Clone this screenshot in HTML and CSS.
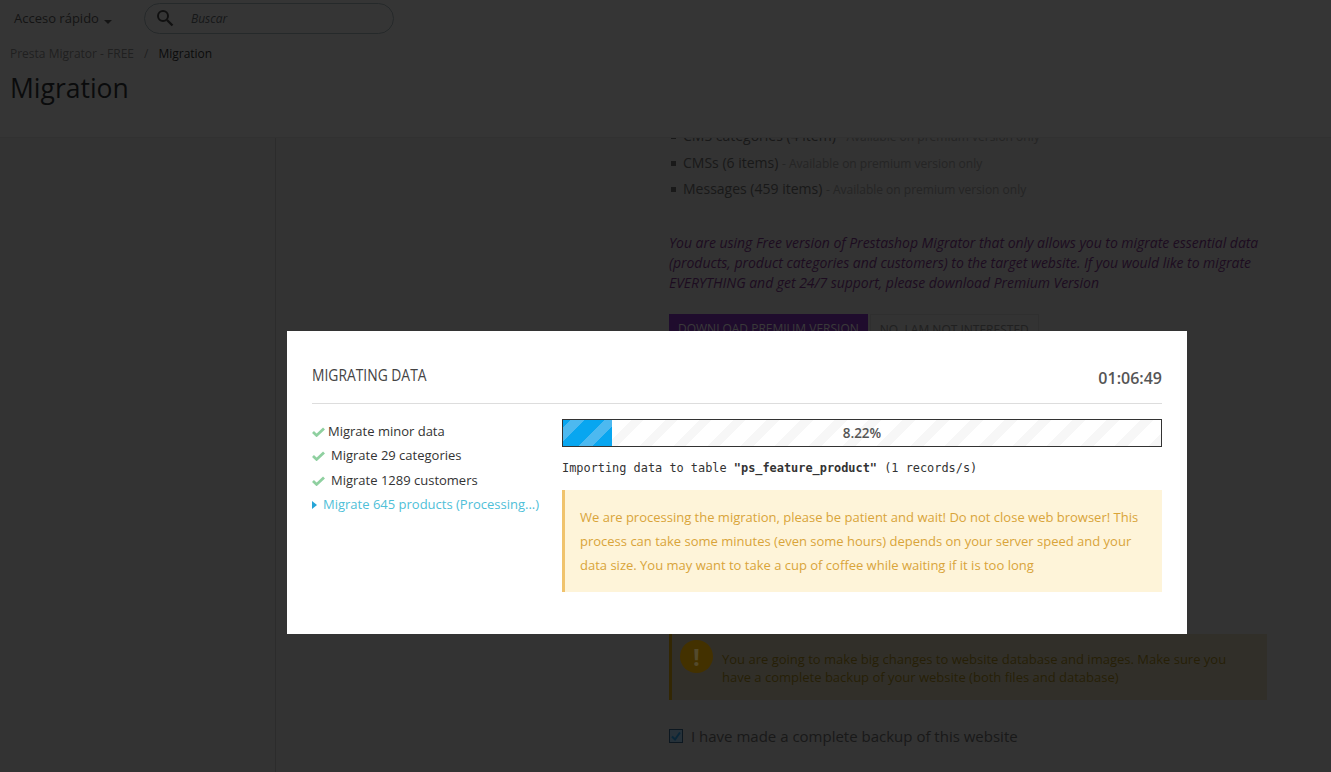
FILE: index.html
```html
<!DOCTYPE html>
<html lang="en">
<head>
  <meta charset="UTF-8" />
  <meta name="viewport" content="width=device-width, initial-scale=1.0"/>
  <title>Migration</title>
  <link rel="stylesheet" href="styles.css">
</head>
<body>

  <header class="top">
    <div class="top-bar">
      <span class="quick">Acceso rápido <i class="caret"></i></span>
      <div class="search">
        <svg class="search-icon" width="18" height="18" viewBox="0 0 18 18"><circle cx="7" cy="7" r="5" fill="none" stroke="currentColor" stroke-width="2"/><path d="M11 11l5.5 5.5" stroke="currentColor" stroke-width="2.4"/></svg>
        <em>Buscar</em>
      </div>
    </div>
    <div class="crumbs"><span>Presta Migrator - FREE</span><span class="sep">/</span><b>Migration</b></div>
    <h1>Migration</h1>
  </header>

  <div class="page">
    <aside class="side"></aside>
    <main class="main">
      <ul class="items">
        <li>CMS categories (4 item) <small>- Available on premium version only</small></li>
        <li>CMSs (6 items) <small>- Available on premium version only</small></li>
        <li>Messages (459 items) <small>- Available on premium version only</small></li>
      </ul>
      <p class="free">You are using Free version of Prestashop Migrator that only allows you to migrate essential data (products, product categories and customers) to the target website. If you would like to migrate EVERYTHING and get 24/7 support, please download Premium Version</p>
      <div class="free-btns">
        <span class="btn-buy">DOWNLOAD PREMIUM VERSION</span>
        <span class="btn-no">NO, I AM NOT INTERESTED</span>
      </div>
      <div class="warn">
        <span class="warn-icon">!</span>
        <p>You are going to make big changes to website database and images. Make sure you have a complete backup of your website (both files and database)</p>
      </div>
      <label class="confirm">
        <span class="check"><svg width="12" height="12" viewBox="0 0 12 12"><path d="M2 6.5l3 3 5-7" fill="none" stroke="#17608c" stroke-width="2"/></svg></span>
        I have made a complete backup of this website
      </label>
    </main>
  </div>

  <div class="overlay"></div>

  <div class="modal">
    <div class="modal-head">
      <h2>MIGRATING DATA</h2>
      <span class="timer">01:06:49</span>
    </div>
    <div class="modal-body">
      <ul class="steps">
        <li class="first"><svg class="tick" width="13" height="10" viewBox="0 0 13 10"><path d="M1 5l3.6 3.4L12 1.5" fill="none" stroke="#8fd0a0" stroke-width="2.8"/></svg>Migrate minor data</li>
        <li><svg class="tick" width="13" height="10" viewBox="0 0 13 10"><path d="M1 5l3.6 3.4L12 1.5" fill="none" stroke="#8fd0a0" stroke-width="2.8"/></svg>Migrate 29 categories</li>
        <li><svg class="tick" width="13" height="10" viewBox="0 0 13 10"><path d="M1 5l3.6 3.4L12 1.5" fill="none" stroke="#8fd0a0" stroke-width="2.8"/></svg>Migrate 1289 customers</li>
        <li class="active"><i class="arrow"></i>Migrate 645 products (Processing...)</li>
      </ul>
      <div class="status">
        <div class="progress">
          <div class="progress-bar" style="width: 8.22%"></div>
          <span class="progress-label">8.22%</span>
        </div>
        <div class="table-line">Importing data to table <b>"ps_feature_product"</b> (1 records/s)</div>
        <div class="notice">We are processing the migration, please be patient and wait! Do not close web browser! This process can take some minutes (even some hours) depends on your server speed and your data size. You may want to take a cup of coffee while waiting if it is too long</div>
      </div>
    </div>
  </div>

</body>
</html>
```

FILE: styles.css
```css
* {
  margin: 0;
  padding: 0;
  box-sizing: border-box;
}

html, body {
  height: 772px;
  overflow: hidden;
}

body {
  font-family: "Open Sans", sans-serif;
  font-size: 14px;
  color: #555;
  background: #7f7f7f;
  position: relative;
}

/* header */
.top {
  position: relative;
  z-index: 2;
  height: 138px;
  background: #868686;
  border-bottom: 1px solid #7a7a7a;
  padding-left: 10px;
}

.top-bar {
  display: flex;
  align-items: center;
  height: 36px;
}

.quick {
  font-size: 13px;
  color: #343434;
  margin-left: 4px;
  width: 130px;
}

.caret {
  display: inline-block;
  border: 4px solid transparent;
  border-top-color: #343434;
  border-bottom: 0;
  margin-left: 2px;
  vertical-align: -1px;
}

.search {
  display: flex;
  align-items: center;
  width: 250px;
  height: 31px;
  border: 1px solid #5e6669;
  border-radius: 16px;
  color: #2a2a2a;
  padding-left: 11px;
}

.search em {
  font-size: 12px;
  margin-left: 17px;
  color: #383c40;
}

.crumbs {
  font-size: 12px;
  margin-top: 9px;
  color: #505050;
}

.crumbs .sep {
  margin: 0 10px;
}

.crumbs b {
  font-weight: 400;
  color: #1b1d20;
}

h1 {
  font-size: 26.5px;
  font-weight: 400;
  color: #1b1d20;
  line-height: 36px;
  margin-top: 8px;
}

/* page behind the dialog */
.page {
  display: grid;
  grid-template-columns: 276px 1fr;
  height: 634px;
}

.side {
  border-right: 1px solid #6e6e6e;
}

.main {
  padding: 0 64px 0 393px;
  margin-top: -15px;
}

.items {
  list-style: none;
  font-size: 14px;
  line-height: 26.5px;
  color: #404040;
}

.items li {
  height: 26.5px;
}

.items li::before {
  content: "";
  display: inline-block;
  width: 5px;
  height: 5px;
  margin: 0 7px 2px 2px;
  background: #404040;
}

.items small {
  font-size: 12px;
  color: #5c5c5c;
}

.free {
  font-style: italic;
  line-height: 20px;
  letter-spacing: -0.03px;
  color: #4a1f52;
  margin-top: 30px;
}

.free-btns {
  display: flex;
  gap: 2px;
  margin-top: 21px;
  height: 30px;
  font-size: 12px;
}

.btn-buy {
  background: #4f1f70;
  color: #909090;
  padding: 6px 9px;
}

.btn-no {
  border: 1px solid #767676;
  padding: 6px 9px;
  color: #505050;
}

.warn {
  display: flex;
  gap: 9px;
  height: 66px;
  margin-top: 290px;
  background: #7c7768;
  border-left: 3px solid #806308;
  padding: 6px 30px 0 8px;
  font-size: 13px;
  line-height: 18px;
  color: #5f4f10;
}

.warn p {
  margin-top: 10px;
}

.warn-icon {
  flex: none;
  width: 33px;
  height: 33px;
  border-radius: 50%;
  background: #a87a00;
  color: #d0b870;
  font-size: 24px;
  font-weight: 700;
  line-height: 33px;
  text-align: center;
}

.confirm {
  display: flex;
  align-items: center;
  gap: 8px;
  margin-top: 26px;
  font-size: 15px;
  color: #404040;
}

.check {
  display: flex;
  align-items: center;
  justify-content: center;
  width: 14px;
  height: 14px;
  border: 1px solid #1f3a52;
  background: #5f7a8e;
}

.overlay {
  position: absolute;
  inset: 0;
  z-index: 3;
  background: rgba(0, 0, 0, 0.6);
}

/* dialog */
.modal {
  position: absolute;
  z-index: 4;
  left: 287px;
  top: 331px;
  width: 900px;
  height: 303px;
  background: #fff;
  padding: 25px;
  color: #333;
}

.modal-head {
  display: flex;
  justify-content: space-between;
  align-items: flex-start;
  height: 48px;
  border-bottom: 1px solid #ddd;
}

.modal-head h2 {
  font-size: 17px;
  font-weight: 400;
  line-height: 20px;
  margin-top: 9px;
  color: #444;
  transform: scaleX(0.815);
  transform-origin: left center;
}

.timer {
  font-size: 16px;
  font-weight: 600;
  line-height: 20px;
  margin-top: 12px;
  color: #555;
}

.modal-body {
  display: flex;
  margin-top: 15px;
}

.steps {
  list-style: none;
  width: 250px;
  font-size: 13px;
  line-height: 24.4px;
}

.tick {
  margin-right: 6px;
  vertical-align: -1px;
}

.first .tick {
  margin-right: 3px;
}

.active {
  color: #4fc0d8;
}

.arrow {
  display: inline-block;
  border: 4px solid transparent;
  border-left: 5px solid #25a5d7;
  border-right: 0;
  margin-right: 6px;
}

.status {
  width: 600px;
}

.progress {
  position: relative;
  height: 28px;
  border: 1px solid #333;
  background: repeating-linear-gradient(-45deg, #f7f7f7 0 9px, #fff 9px 24px);
}

.progress-bar {
  height: 100%;
  background: repeating-linear-gradient(-45deg, #08a6f0 0 14px, #4db9f0 14px 24px);
}

.progress-label {
  position: absolute;
  inset: 0;
  text-align: center;
  line-height: 26px;
  font-size: 13.5px;
  font-weight: 600;
  color: #555;
}

.table-line {
  font-family: "DejaVu Sans Mono", monospace;
  font-size: 11.9px;
  color: #333;
  margin-top: 13px;
  line-height: 16px;
}

.notice {
  margin-top: 14px;
  height: 102px;
  padding: 15px 15px 0 15px;
  background: #fef4d9;
  border-left: 3px solid #f0c36d;
  font-size: 13px;
  line-height: 24px;
  color: #d9a43a;
}
```
